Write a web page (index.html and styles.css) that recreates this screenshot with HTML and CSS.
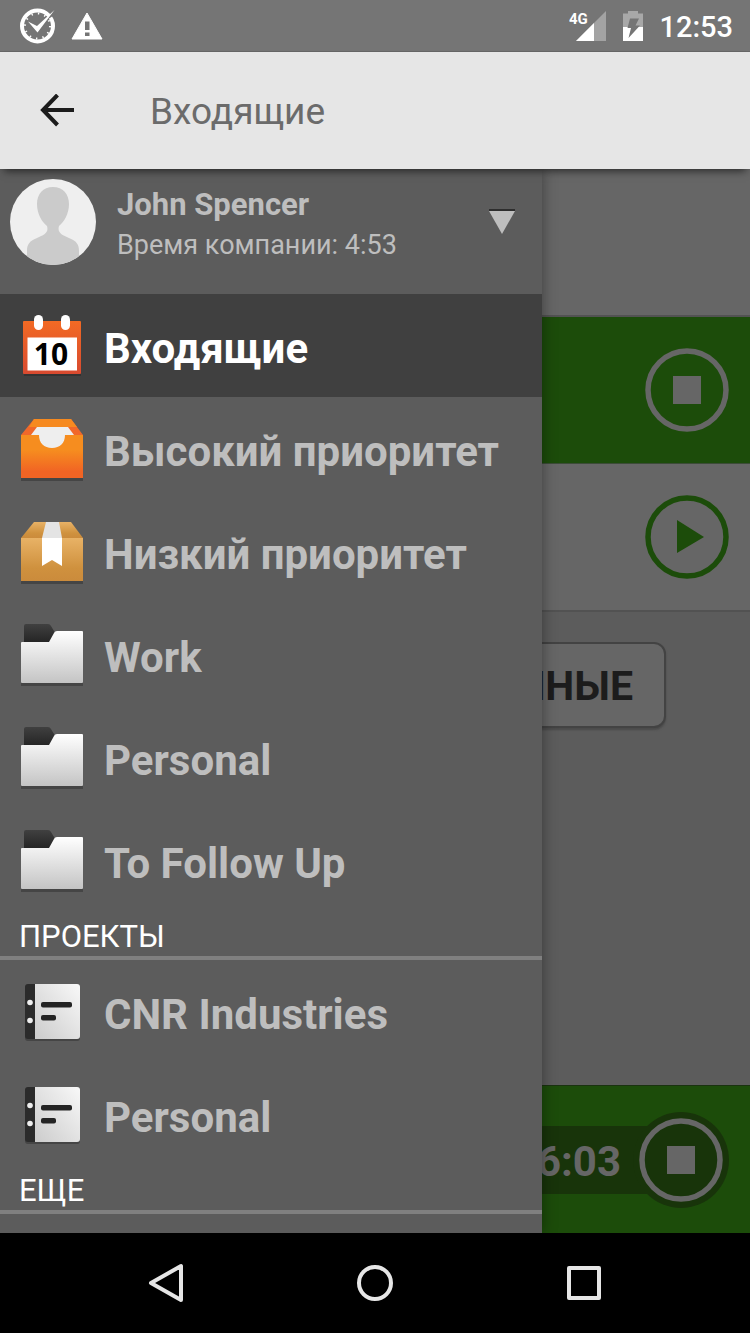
FILE: index.html
```
<!DOCTYPE html>
<html lang="ru">
<head>
    <meta charset="UTF-8">
    <meta name="viewport" content="width=device-width, initial-scale=1.0">
    <title>Входящие</title>
    <link rel="stylesheet" href="styles.css">
</head>
<body>
    <!-- shared icon shapes -->
    <svg class="defs" width="0" height="0" aria-hidden="true">
        <defs>
            <linearGradient id="red" x1="0" y1="0" x2="0" y2="1">
                <stop offset="0" stop-color="#f26a24"/>
                <stop offset="1" stop-color="#d84a30"/>
            </linearGradient>
            <linearGradient id="orange" x1="0" y1="0" x2="0" y2="1">
                <stop offset="0.35" stop-color="#f68d1f"/>
                <stop offset="0.85" stop-color="#f16424"/>
            </linearGradient>
            <linearGradient id="carton" x1="0" y1="0" x2="0" y2="1">
                <stop offset="0" stop-color="#e8b266"/>
                <stop offset="0.7" stop-color="#cf913e"/>
                <stop offset="1" stop-color="#cb8b3c"/>
            </linearGradient>
            <linearGradient id="paper" x1="0" y1="0" x2="0" y2="1">
                <stop offset="0" stop-color="#ffffff"/>
                <stop offset="1" stop-color="#c4c4c4"/>
            </linearGradient>
            <linearGradient id="page" x1="1" y1="0" x2="0" y2="1">
                <stop offset="0" stop-color="#f8f8f8"/>
                <stop offset="1" stop-color="#cccccc"/>
            </linearGradient>
            <linearGradient id="dark" x1="0" y1="0" x2="0" y2="1">
                <stop offset="0" stop-color="#404040"/>
                <stop offset="1" stop-color="#242424"/>
            </linearGradient>
        </defs>
        <symbol id="folder" viewBox="0 0 64 65">
            <rect x="1" y="59" width="62" height="4" fill="#454545"/>
            <path d="M4 3Q4 1 6 1H28Q30 1 31 3L34 8V20H4Z" fill="url(#dark)"/>
            <path d="M1 20Q1 19 2 19H29L34 10Q35 8 37 8H62Q63 8 63 9V59Q63 60 62 60H2Q1 60 1 59Z" fill="url(#paper)"/>
        </symbol>
        <symbol id="notebook" viewBox="0 0 64 65">
            <rect x="5" y="8" width="55" height="53" rx="3" fill="#454545"/>
            <path d="M8 4H16V59H8Q5 59 5 56V7Q5 4 8 4Z" fill="#2b2b2b"/>
            <path d="M15 4H57Q60 4 60 7V56Q60 59 57 59H15Z" fill="url(#page)"/>
            <circle cx="10" cy="22.5" r="2.8" fill="#eee"/>
            <circle cx="10" cy="40.5" r="2.8" fill="#eee"/>
            <rect x="21" y="22" width="31" height="5.5" rx="2" fill="#242424"/>
            <rect x="21" y="35" width="15" height="5.5" rx="2" fill="#242424"/>
        </symbol>
        <symbol id="stop" viewBox="0 0 84 84">
            <circle cx="42" cy="42" r="39" fill="none" stroke="currentColor" stroke-width="5.5"/>
            <rect x="28" y="28" width="28" height="28" fill="currentColor"/>
        </symbol>
        <symbol id="play" viewBox="0 0 84 84">
            <circle cx="42" cy="42" r="39" fill="none" stroke="currentColor" stroke-width="5.5"/>
            <path d="M32 25L59 42L32 58Z" fill="currentColor"/>
        </symbol>
    </svg>

    <div class="status-bar">
        <svg width="36" height="36" viewBox="0 0 36 36">
            <circle cx="17.5" cy="18" r="15.5" fill="none" stroke="#fff" stroke-width="4"/>
            <circle cx="17.5" cy="18" r="12.5" fill="none" stroke="#fff" stroke-width="2" stroke-dasharray="1.4 5.15"/>
            <path d="M33 1L37 5L27 12Z" fill="#757575"/>
            <path d="M8 13.5L17 18L34.5 2L17.5 24.5Z" fill="#fff"/>
        </svg>
        <svg width="32" height="28" viewBox="0 0 32 28">
            <path d="M16 1L31 27H1Z" fill="#fff" stroke="#fff" stroke-width="1" stroke-linejoin="round"/>
            <path d="M14 9.5H18.500V18H14ZM14 20.500H18.500V24H14Z" fill="#757575"/>
        </svg>
        <div class="status-right">
            <svg width="38" height="32" viewBox="0 0 38 32">
                <path d="M37 1V31H7Z" fill="#a3a3a3"/>
                <path d="M25 13V31H7Z" fill="#fff"/>
                <text class="network" x="0" y="14">4G</text>
            </svg>
            <svg width="22" height="32" viewBox="0 0 22 32">
                <path d="M6 1H16V3.500H21V18H1V3.500H6Z" fill="#a8a8a8"/>
                <path d="M1 17H21V31H1Z" fill="#fff"/>
                <path d="M8 8.500H17L13.500 15.500H18L6.500 28L9 18H5.500Z" fill="#757575"/>
            </svg>
            <span class="clock">12:53</span>
        </div>
    </div>

    <header class="app-bar">
        <button class="back-btn" aria-label="Назад">
            <svg width="34" height="34" viewBox="0 0 34 34">
                <path d="M17.500 1L3 16L17.500 31M3 16H34" fill="none" stroke="#1c1c1c" stroke-width="4"/>
            </svg>
        </button>
        <h1>Входящие</h1>
    </header>

    <div class="stage">
        <main class="content">
            <div class="row row-blank"></div>
            <div class="row row-active">
                <button class="round-btn" aria-label="Стоп"><svg width="84" height="84"><use href="#stop"/></svg></button>
            </div>
            <div class="row">
                <button class="round-btn green" aria-label="Старт"><svg width="84" height="84"><use href="#play"/></svg></button>
            </div>
            <button class="wide-btn">ННЫЕ</button>
            <div class="timer-bar">
                <div class="timer">6:03</div>
                <button class="round-btn timer-btn" aria-label="Стоп"><svg width="84" height="84"><use href="#stop"/></svg></button>
            </div>
        </main>

        <aside class="drawer">
            <div class="user">
                <svg width="86" height="86" viewBox="0 0 86 86">
                    <defs><clipPath id="round"><circle cx="43" cy="43" r="43"/></clipPath></defs>
                    <g clip-path="url(#round)">
                        <rect width="86" height="86" fill="#efefef"/>
                        <path d="M43 8C53 8 59 15 59 25C59 35 54 43 49 47C47 54 52 56 59 59C67 62 69 66 69 72V86H17V72C17 66 19 62 27 59C34 56 39 54 37 47C32 43 27 35 27 25C27 15 33 8 43 8Z" fill="#cbcbcb"/>
                    </g>
                </svg>
                <div class="user-info">
                    <div class="user-name">John Spencer</div>
                    <div class="user-time">Время компании: 4:53</div>
                </div>
                <button class="user-toggle" aria-label="Меню">
                    <svg width="26" height="26" viewBox="0 0 26 26">
                        <path d="M0 0H26V2H0Z" fill="#2e2e2e"/>
                        <path d="M0 2H26L13 25Z" fill="#bebebe"/>
                    </svg>
                </button>
            </div>

            <nav>
                <a class="item active" href="#inbox">
                    <svg width="64" height="65" viewBox="0 0 64 65">
                        <rect x="4" y="9" width="57" height="53" fill="#333"/>
                        <rect x="3" y="7" width="58" height="53" rx="1" fill="url(#red)"/>
                        <rect x="7.500" y="23.500" width="49.500" height="33" fill="#fff"/>
                        <rect x="14" y="1" width="9" height="15" rx="4.500" fill="#fff"/>
                        <rect x="41" y="1" width="9" height="15" rx="4.500" fill="#fff"/>
                        <text class="day" x="31" y="51">10</text>
                    </svg>
                    <span>Входящие</span>
                </a>
                <a class="item" href="#high">
                    <svg width="64" height="65" viewBox="0 0 64 65">
                        <rect x="1" y="60" width="62" height="4" fill="#454545"/>
                        <path d="M14 2H51L63 18H1Z" fill="#f1682a"/>
                        <path d="M14 2H51L57 10H9Z" fill="#f68a20"/>
                        <path d="M1 18H63V61H1Z" fill="url(#orange)"/>
                        <path d="M17 10H48L54 18H45C45 26 40 31 32 31C24 31 19 26 19 18H11Z" fill="#eee"/>
                    </svg>
                    <span>Высокий приоритет</span>
                </a>
                <a class="item" href="#low">
                    <svg width="64" height="65" viewBox="0 0 64 65">
                        <rect x="1" y="60" width="62" height="4" fill="#454545"/>
                        <path d="M14 2H51L63 18H1Z" fill="url(#carton)"/>
                        <path d="M1 18H63V61H1Z" fill="url(#carton)"/>
                        <path d="M26 2H39L42 18H22Z" fill="#e4e4e4"/>
                        <path d="M22 18H42V46L32 40L22 46Z" fill="#fff"/>
                    </svg>
                    <span>Низкий приоритет</span>
                </a>
                <a class="item" href="#work">
                    <svg width="64" height="65"><use href="#folder"/></svg>
                    <span>Work</span>
                </a>
                <a class="item" href="#personal">
                    <svg width="64" height="65"><use href="#folder"/></svg>
                    <span>Personal</span>
                </a>
                <a class="item" href="#follow-up">
                    <svg width="64" height="65"><use href="#folder"/></svg>
                    <span>To Follow Up</span>
                </a>

                <h2>ПРОЕКТЫ</h2>
                <a class="item" href="#cnr">
                    <svg width="64" height="65"><use href="#notebook"/></svg>
                    <span>CNR Industries</span>
                </a>
                <a class="item" href="#project-personal">
                    <svg width="64" height="65"><use href="#notebook"/></svg>
                    <span>Personal</span>
                </a>

                <h2>ЕЩЕ</h2>
            </nav>
        </aside>
    </div>

    <div class="system-nav">
        <button aria-label="Назад">
            <svg width="40" height="40" viewBox="0 0 40 40"><path d="M35 3V37L5 20Z"/></svg>
        </button>
        <button aria-label="Домой">
            <svg width="40" height="40" viewBox="0 0 40 40"><circle cx="20" cy="20" r="16"/></svg>
        </button>
        <button aria-label="Обзор">
            <svg width="40" height="40" viewBox="0 0 40 40"><rect x="5" y="5" width="30" height="30"/></svg>
        </button>
    </div>
</body>
</html>
```
FILE: styles.css
```
* {
    box-sizing: border-box;
}

body {
    margin: 0;
    min-height: 100vh;
    display: flex;
    flex-direction: column;
    font-family: Roboto, sans-serif;
    background-color: #5c5c5c;
}

button {
    font-family: inherit;
    border: none;
    background: none;
    padding: 0;
    cursor: pointer;
}

svg {
    display: block;
    flex-shrink: 0;
}

.defs {
    position: absolute;
}

/* status bar */
.status-bar {
    display: flex;
    align-items: center;
    gap: 15px;
    height: 52px;
    padding: 0 17px 0 20px;
    background-color: #757575;
    border-bottom: 1px solid #666;
    color: #fff;
}

.status-right {
    display: flex;
    align-items: center;
    gap: 15px;
    margin-left: auto;
}

.network {
    font-size: 15px;
    font-weight: bold;
    fill: #fff;
}

.clock {
    padding-top: 2px;
    font-size: 29px;
    font-weight: 500;
}

/* title bar */
.app-bar {
    position: relative;
    z-index: 2;
    display: flex;
    align-items: center;
    gap: 74px;
    height: 117px;
    padding: 0 40px;
    background-color: #e6e6e6;
    box-shadow: 0 6px 8px -4px rgba(0, 0, 0, 0.6);
}

.app-bar h1 {
    margin: 0;
    padding: 2px 0 0 2px;
    font-size: 37px;
    font-weight: normal;
    color: #6b6b6b;
}

.stage {
    position: relative;
    flex: 1;
    display: flex;
}

/* dimmed page under the drawer */
.content {
    flex: 1;
    display: flex;
    flex-direction: column;
    align-items: flex-end;
}

.row {
    display: flex;
    align-items: center;
    justify-content: flex-end;
    width: 100%;
    height: 148px;
    padding-right: 21px;
    background-color: #666;
    border-bottom: 2px solid #525252;
}

.row-active {
    height: 147px;
    background-color: #1c4c0a;
    border-bottom: 1px solid #3c4c38;
}

.round-btn {
    color: #666;
}

.round-btn.green {
    color: #1c4c0a;
}

.wide-btn {
    margin: 30px 84px 0 0;
    padding: 2px 31px 0;
    height: 86px;
    border: 2px solid #434343;
    border-radius: 12px;
    background-color: #666;
    box-shadow: 0 2px 2px #4a4a4a;
    font-size: 41px;
    font-weight: bold;
    color: #1c1c1c;
}

.timer-bar {
    display: flex;
    align-items: center;
    justify-content: flex-end;
    width: 100%;
    height: 148px;
    margin-top: auto;
    padding-right: 21px;
    background-color: #1c4c0a;
    border-top: 1px solid #1a3310;
}

.timer {
    height: 68px;
    padding: 2px 60px 0;
    margin-right: -48px;
    background-color: #18340a;
    font-size: 42px;
    font-weight: bold;
    line-height: 68px;
    color: #666;
}

.timer-btn {
    position: relative;
    padding: 6px;
    border-radius: 50%;
    background-color: #18340a;
}

/* drawer */
.drawer {
    position: absolute;
    top: 0;
    bottom: 0;
    left: 0;
    width: calc(100% - 208px);
    background-color: #5c5c5c;
    box-shadow: 0 0 14px rgba(0, 0, 0, 0.4);
    overflow: hidden;
}

.user {
    display: flex;
    align-items: flex-start;
    gap: 21px;
    height: 125px;
    padding: 10px 27px 0 10px;
    color: #bebebe;
}

.user-info {
    padding-top: 6px;
}

.user-name {
    font-size: 31px;
    font-weight: bold;
    line-height: 40px;
}

.user-time {
    font-size: 27px;
    line-height: 40px;
}

.user-toggle {
    margin: 30px 0 0 auto;
}

.item {
    display: flex;
    align-items: center;
    gap: 20px;
    height: 103px;
    padding: 2px 0 0 20px;
    font-size: 42px;
    font-weight: bold;
    line-height: 50px;
    color: #bebebe;
    text-decoration: none;
    white-space: nowrap;
}

.item span {
    padding-top: 4px;
}

.item.active {
    background-color: #404040;
    color: #fff;
}

.day {
    font-family: "Open Sans", sans-serif;
    font-size: 30px;
    font-weight: bold;
    text-anchor: middle;
    fill: #000;
}

.drawer h2 {
    margin: 0;
    padding: 6px 19px 0;
    height: 48px;
    border-bottom: 4px solid #808080;
    font-size: 31px;
    font-weight: normal;
    line-height: 38px;
    color: #fff;
}

/* system buttons */
.system-nav {
    display: flex;
    justify-content: space-around;
    align-items: center;
    height: 100px;
    padding: 0 62px;
    background-color: #000;
}

.system-nav svg {
    fill: none;
    stroke: #e6e6e6;
    stroke-width: 4;
    stroke-linejoin: round;
}
```
